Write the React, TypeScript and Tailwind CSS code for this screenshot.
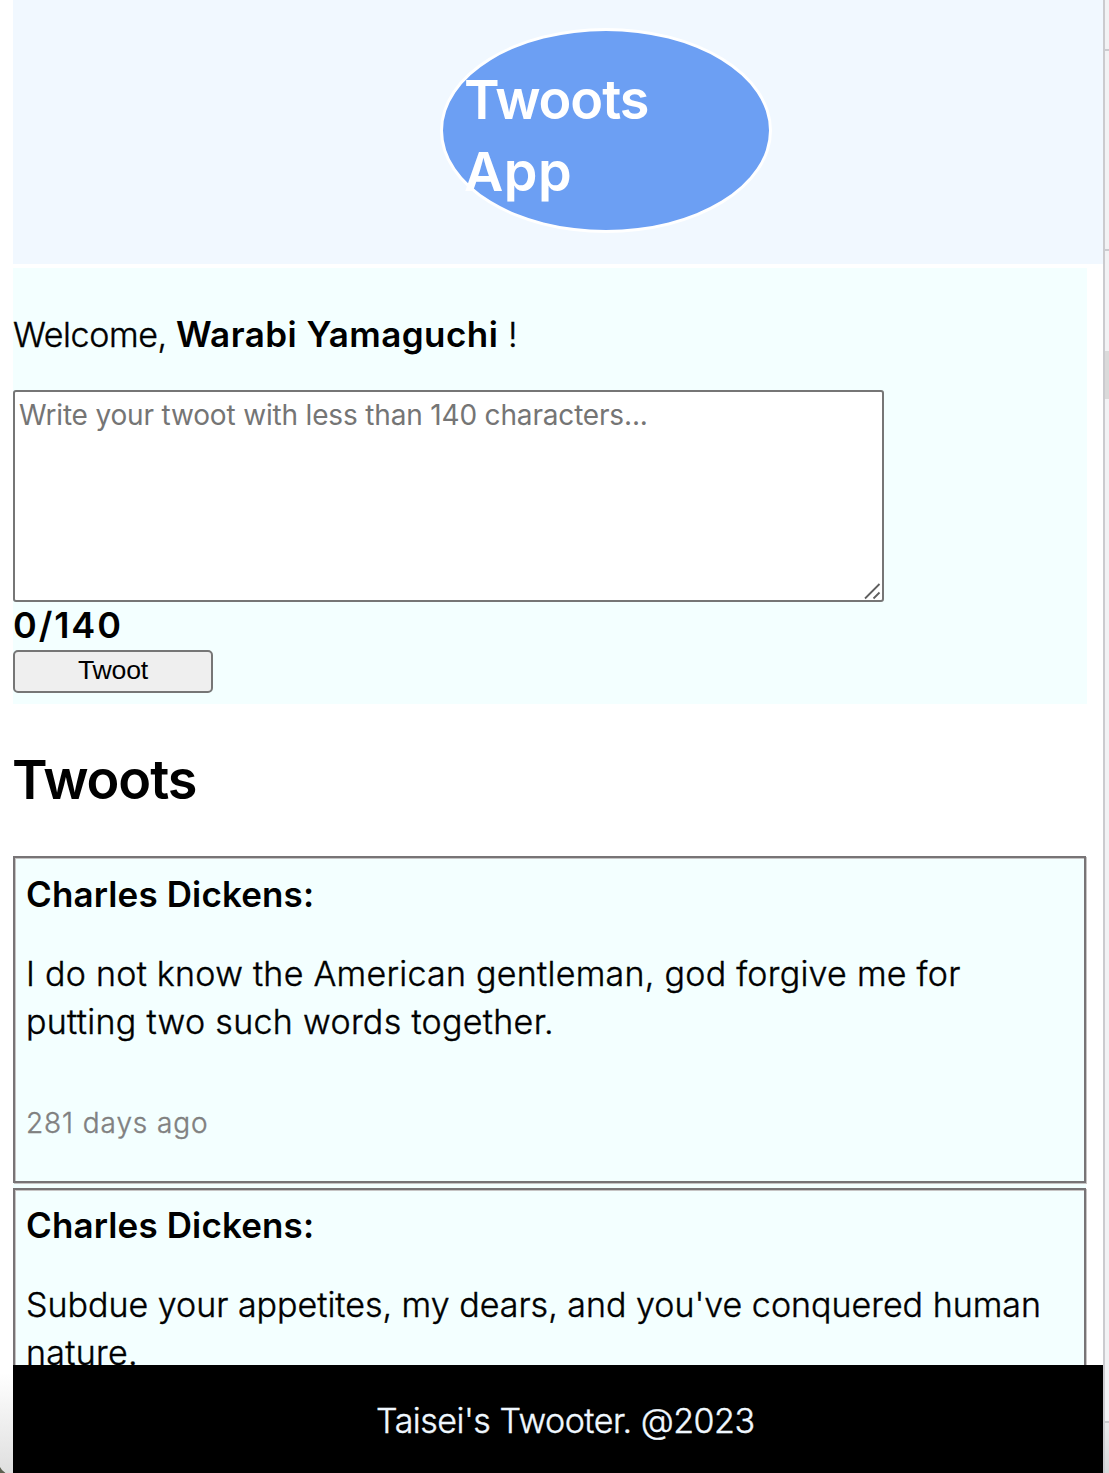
type TwootProps = {
  author: string;
  lines: { text: string; className: string }[];
  age?: string;
  className: string;
};

function Twoot({ author, lines, age, className }: TwootProps) {
  return (
    <article
      className={`box-border h-[327px] w-[1073px] shrink-0 border-2 border-[#777476] bg-[#f3ffff] pl-[11px] shadow-[1px_1px_0_#c6c4c4,inset_1px_1px_0_#c6c4c4] ${className}`}
    >
      <h3 className="h-12 whitespace-nowrap text-[35px] font-semibold leading-[48px] tracking-[0.13px]">{author}</h3>
      <div className="mt-8 text-[34px] font-light leading-[48px] [-webkit-text-stroke:0.4px]">
        {lines.map((line) => (
          <div key={line.text} className={line.className}>
            {line.text}
          </div>
        ))}
      </div>
      {age && (
        <p className="mt-[57px] text-[28px] font-light leading-[40px] tracking-[0.9px] text-[#808080] [-webkit-text-stroke:0.4px]">{age}</p>
      )}
    </article>
  );
}

export default function App() {
  return (
    <div className="flex h-[1473px] w-[1109px] overflow-hidden bg-white font-['Inter',sans-serif] text-black">
      <div className="flex w-[13px] shrink-0 flex-col justify-end">
        <div className="flex h-[100px] items-end bg-gradient-to-b from-white to-[#dfdfdf]">
          <svg width="6" height="6" viewBox="0 0 6 6">
            <path d="M0 0Q1.5 3.5 5.5 6H0Z" fill="#5c6050" />
          </svg>
        </div>
      </div>

      <div className="relative flex h-full w-[1090px] shrink-0 flex-col">
        <header className="h-[264px] shrink-0 bg-[#f1f8ff] pl-[427px] pt-7">
          <div className="h-[205px] w-[332px] rounded-[50%] border-[3px] border-white bg-[#6c9ff3] pl-[21px] pt-[33px]">
            <h1 className="text-[54px] font-semibold leading-[72px] text-white">
              <div className="tracking-[-1.1px]">Twoots</div>
              <div className="tracking-[0.5px]">App</div>
            </h1>
          </div>
        </header>

        <form className="mt-1 flex h-[436px] w-[1074px] shrink-0 flex-col bg-[#f3ffff]">
          <p className="mt-[42px] h-12 whitespace-pre text-[34px] font-light leading-[48px]">
            <span className="tracking-[-0.4px] [-webkit-text-stroke:0.4px]">Welcome, </span>
            <span className="text-[35px] font-semibold tracking-[0.46px]">Warabi Yamaguchi</span>
            <span className="[-webkit-text-stroke:0.4px]"> !</span>
          </p>
          <div className="mt-8 flex h-[212px] w-[871px] flex-col justify-between rounded-[3px] border-2 border-[#767676] bg-white">
            <div className="pl-1 pt-[3px] text-[28px] leading-[40px] tracking-[-0.17px] text-[#757575]">
              Write your twoot with less than 140 characters...
            </div>
            <svg className="mr-px self-end" width="18" height="18" viewBox="0 0 18 18" fill="none" stroke="#5f5f5f" strokeWidth="1.8">
              <path d="M2 16.5 16.5 2M10.5 16.5 16.5 10.5" />
            </svg>
          </div>
          <div className="h-12 text-[36px] font-semibold leading-[47px] tracking-[1.9px]">0/140</div>
          <button
            type="button"
            className="h-[43px] w-[200px] rounded-[5px] border-2 border-[#767676] bg-[#efefef] pb-0.5 text-center font-['Liberation_Sans',sans-serif] text-[26.67px] leading-[37px] tracking-[-0.2px]"
          >
            Twoot
          </button>
        </form>

        <h2 className="-ml-px mt-[40px] h-[72px] shrink-0 text-[54px] font-semibold leading-[72px] tracking-[-1.1px]">Twoots</h2>

        <main className="mt-[40px] flex w-[1073px] shrink-0 flex-col gap-[5px] bg-[#f3ffff]">
          <Twoot
            className="pt-3"
            author="Charles Dickens:"
            lines={[
              { text: "I do not know the American gentleman, god forgive me for", className: "whitespace-nowrap tracking-[0.26px]" },
              { text: "putting two such words together.", className: "whitespace-nowrap tracking-[0.31px]" },
            ]}
            age="281 days ago"
          />
          <Twoot
            className="pt-[11px]"
            author="Charles Dickens:"
            lines={[
              { text: "Subdue your appetites, my dears, and you've conquered human", className: "whitespace-nowrap tracking-normal" },
              { text: "nature.", className: "whitespace-nowrap tracking-[0.3px]" },
            ]}
          />
        </main>

        <footer className="absolute bottom-0 left-0 h-[108px] w-full bg-black pl-[363px] pt-8 text-[34px] font-light leading-[48px] tracking-[-0.5px] text-[#f0f8ff] [-webkit-text-stroke:0.4px]">
          Taisei's Twooter. @2023
        </footer>
      </div>

      <div className="w-0.5 shrink-0 bg-[#cbcbcf]" />
      <div className="flex w-1 shrink-0 flex-col bg-[#f2f2f4]">
        <div className="mt-[49px] h-0.5 bg-[#cbcbcf]" />
        <div className="mt-[198px] h-0.5 bg-[#cbcbcf]" />
        <div className="mt-[100px] h-12 bg-[#dadada]" />
        <div className="mt-auto h-[52px] border-t-2 border-[#cbcbcf] bg-gradient-to-b from-[#eaeaec] to-[#d8d8da]" />
      </div>
    </div>
  );
}
